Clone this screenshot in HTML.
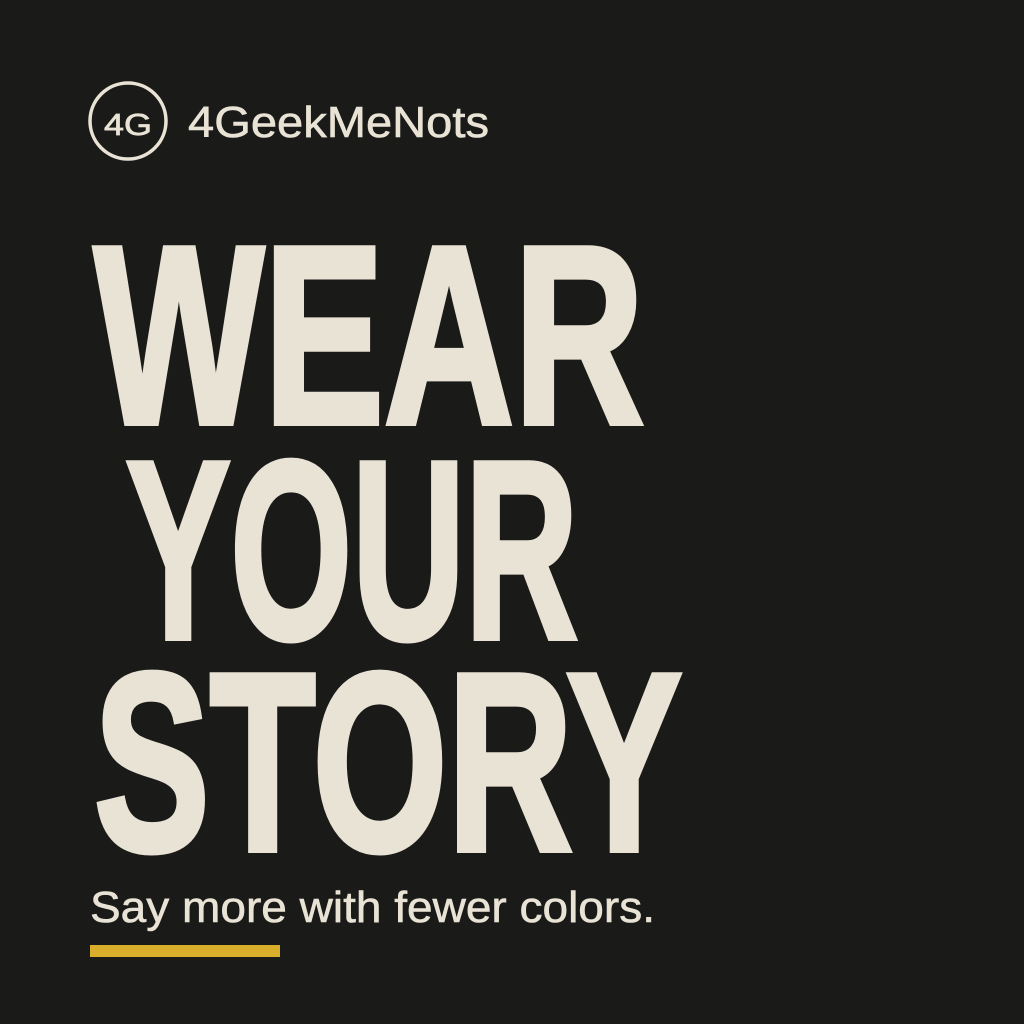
<!DOCTYPE html>
<html><head><meta charset="utf-8"><style>
html,body{margin:0;padding:0;background:#1b1b1a;}
svg{display:block}
</style></head><body>
<svg width="1024" height="1024" viewBox="0 0 1024 1024" xmlns="http://www.w3.org/2000/svg">
<rect width="1024" height="1024" fill="#1a1a19"/>
<g fill="#e9e3d5" stroke="#e9e3d5" font-family="Liberation Sans, sans-serif">
<circle cx="128" cy="121" r="38" fill="none" stroke-width="3.5"/>
<text x="104" y="135" font-size="31" stroke-width="0.7" textLength="48" lengthAdjust="spacingAndGlyphs">4G</text>
<text x="188" y="137" font-size="44" stroke-width="0.6" textLength="301" lengthAdjust="spacingAndGlyphs">4GeekMeNots</text>
<g font-weight="bold" font-size="254" stroke-width="6" stroke-linejoin="miter">
<text x="94" y="423" textLength="550" lengthAdjust="spacingAndGlyphs">WEAR</text>
<text x="126" y="638" textLength="452" lengthAdjust="spacingAndGlyphs">YOUR</text>
<text x="94" y="850" textLength="588" lengthAdjust="spacingAndGlyphs">STORY</text>
</g>
<text x="90" y="922" font-size="44" stroke-width="0.6" textLength="565" lengthAdjust="spacingAndGlyphs">Say more with fewer colors.</text>
</g>
<rect x="90" y="945" width="190" height="12" fill="#d8ae2a"/>
</svg>
</body></html>
